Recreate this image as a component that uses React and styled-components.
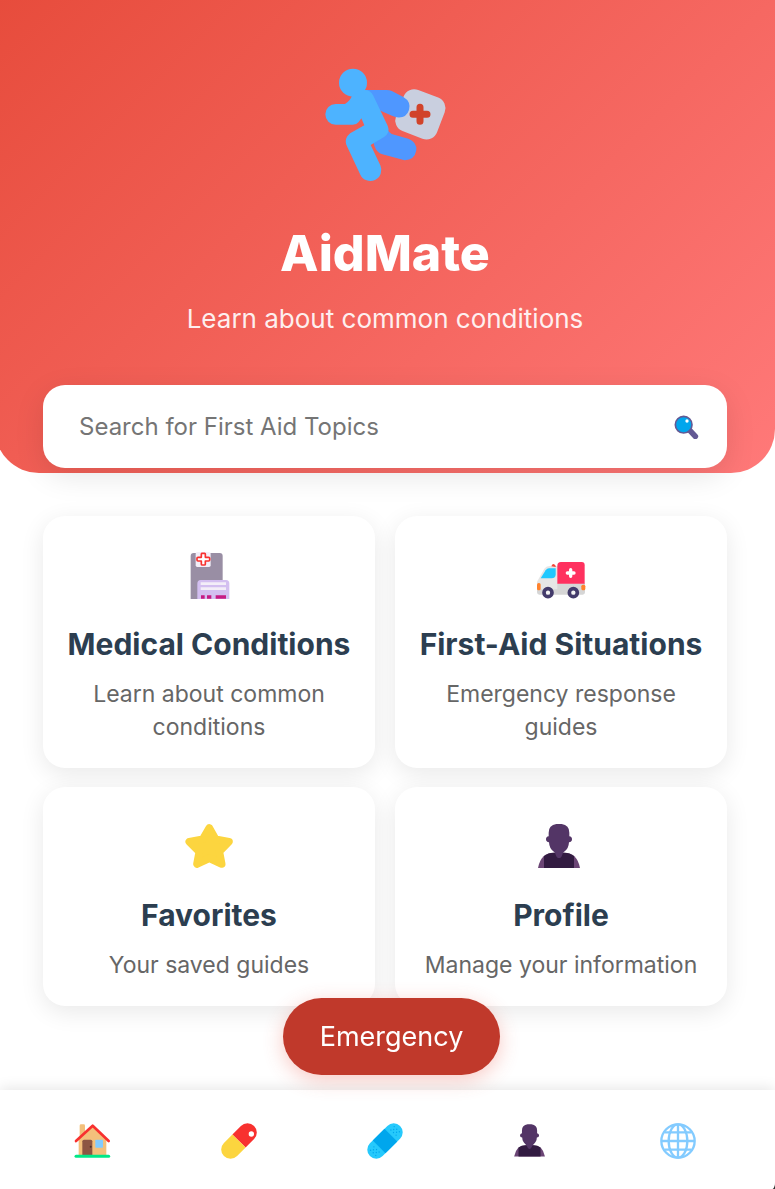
import React from "react";
import styled, { createGlobalStyle } from "styled-components";

const GlobalStyle = createGlobalStyle`
  * { box-sizing: border-box; }
  html { background: #333; }
  body {
    margin: 0;
    overflow-x: hidden;
    font-family: Inter, "Open Sans", sans-serif;
    color: #2c3e50;
  }
  button, input { font-family: inherit; }
`;

const Page = styled.div`
  min-height: 100vh;
  margin-left: -5px;
  padding-bottom: 99px;
  background: #fff;
  border-bottom-right-radius: 3px 8px;
`;

const Header = styled.header`
  display: flex;
  flex-direction: column;
  align-items: center;
  padding: 55px 48px 5px;
  color: #fff;
  text-align: center;
  background: linear-gradient(135deg, #e74c3c, #ff7979);
  border-radius: 0 0 44px 44px;
`;

const AppName = styled.h1`
  margin: 20px 0 0;
  font-size: 50px;
  line-height: 76px;
  font-weight: 800;
`;

const Tagline = styled.p`
  margin: 8px 0 0;
  font-size: 26px;
  line-height: 40px;
  opacity: 0.9;
`;

const SearchBar = styled.form`
  display: flex;
  align-items: center;
  align-self: stretch;
  height: 83px;
  margin-top: 46px;
  padding: 0 20px 0 36px;
  background: #fff;
  border-radius: 22px;
  box-shadow: 0 8px 30px rgba(0, 0, 0, 0.1);
`;

const SearchInput = styled.input`
  flex: 1;
  min-width: 0;
  height: 100%;
  padding: 0;
  border: 0;
  outline: 0;
  background: none;
  font-size: 24px;
  color: #333;
  &::placeholder { color: #757575; opacity: 1; }
`;

const IconButton = styled.button`
  display: flex;
  padding: 8px;
  border: 0;
  background: none;
  cursor: pointer;
`;

const Grid = styled.main`
  display: grid;
  grid-template-columns: repeat(2, 1fr);
  gap: 19px 20px;
  padding: 43px 48px;
`;

const Card = styled.a`
  display: flex;
  flex-direction: column;
  align-items: center;
  padding: 30px 16px 24px;
  text-align: center;
  text-decoration: none;
  color: inherit;
  background: #fff;
  border-radius: 22px;
  box-shadow: 0 6px 24px rgba(0, 0, 0, 0.09);
`;

const CardTitle = styled.h2`
  margin: 17px 0 13px;
  font-size: 30px;
  line-height: 42px;
  font-weight: 700;
  white-space: nowrap;
`;

const CardText = styled.p`
  margin: 0;
  max-width: 284px;
  font-size: 23px;
  line-height: 33px;
  color: #666;
`;

const EmergencyBar = styled.div`
  position: fixed;
  z-index: 3;
  inset: auto 0 114px 0;
  display: flex;
  justify-content: center;
  padding-left: 8px;
  pointer-events: none;
`;

const EmergencyButton = styled.button`
  height: 77px;
  padding: 0 37px;
  border: 0;
  border-radius: 39px;
  background: #c0392b;
  color: #fff;
  font-size: 27px;
  box-shadow: 0 5px 20px rgba(231, 76, 60, 0.3);
  pointer-events: auto;
  cursor: pointer;
`;

const Nav = styled.nav`
  position: fixed;
  z-index: 2;
  inset: auto 0 0 0;
  display: flex;
  height: 99px;
  padding: 2px 24px 0 19px;
  background: #fff;
  border-bottom-right-radius: 3px 8px;
  box-shadow: 0 -2px 14px rgba(0, 0, 0, 0.1);
`;

const NavLink = styled.a`
  flex: 1;
  display: flex;
  align-items: center;
  justify-content: center;
`;

const Logo = () => (
  <svg width="150" height="140" viewBox="0 0 450 420" aria-hidden="true">
    <rect x="265" y="112" width="132" height="132" rx="34" fill="#c9cfdf" transform="rotate(21 331 178)" />
    <path d="M330 157v42M309 178h42" stroke="#d1432a" strokeWidth="21" strokeLinecap="round" />
    <path d="M165 105h65q9 0 17 4l33 17q24 14 17 39-8 25-36 22-7-1-15-5l-40-17-5 38-40-20z" fill="#4f97ff" />
    <path d="M226 210q6 19 19 27l50 14q26 10 24 35-5 29-35 30l-67-18q-17-5-24-26l-5-20z" fill="#4f97ff" />
    <circle cx="129" cy="83" r="42" fill="#4db3ff" />
    <path d="M127 120Q121 137 105 147H77a31 31 0 0 0 0 62H128Q140 209 146 201L154 190L163 211L127 231C108 241 103 258 111 274L151 359A33 33 0 0 0 211 331L182 270L222 246Q242 232 233 212L190 122Q182 105 165 105H150z" fill="#4db3ff" />
  </svg>
);

const SearchIcon = () => (
  <svg width="25" height="25" viewBox="0 0 75 75" aria-hidden="true">
    <path d="M48 50l16 17" stroke="#635994" strokeWidth="17" strokeLinecap="round" />
    <circle cx="29" cy="32" r="25" fill="#00a6ed" stroke="#635994" strokeWidth="5" />
    <circle cx="39" cy="21" r="5" fill="#fff" />
  </svg>
);

const BookletIcon = () => (
  <svg width="60" height="60" viewBox="0 0 180 180" aria-hidden="true">
    <path d="M35 159V30q0-9 9-9h78q9 0 9 9v129z" fill="#998ea4" />
    <rect x="50" y="18" width="45" height="45" rx="5" fill="#f3eef8" />
    <path d="M68 22h9q2 0 2 2v10h10q3 0 3 3v5q0 3-3 3H79v10q0 2-3 2h-6q-3 0-3-2V45H57q-3 0-3-3v-5q0-3 3-3h10V24z" fill="#fff" stroke="#f8312f" strokeWidth="5" strokeLinejoin="round" />
    <path d="M55 159v-46q0-11 10-11h76q10 0 10 11v46z" fill="#d3bff0" />
    <path d="M65 113h76M65 128h76" stroke="#f3eef8" strokeWidth="8" />
    <path d="M66 153h11M84 153h13M110 153h31" stroke="#c61b83" strokeWidth="11" />
  </svg>
);

const AmbulanceIcon = () => (
  <svg width="60" height="60" viewBox="0 0 180 180" aria-hidden="true">
    <path d="M18 139v-32l22-39q5-8 15-8h38v79z" fill="#e6e6e6" />
    <path d="M79 112h83v27q0 7-7 7H25q-7 0-7-7v-9h61z" fill="#d6d6d6" />
    <path d="M79 113V59q0-11 11-11h62q9 0 9 9v56z" fill="#ff315f" />
    <path d="M29 97l15-24q4-6 10-6h20v18q0 12-12 12z" fill="#20c8ff" />
    <path d="M61 61q5-13 13-2v4z" fill="#f44336" />
    <path d="M119 71v20M109 81h20" stroke="#fff" strokeWidth="10" strokeLinecap="round" />
    <rect x="18" y="111" width="11" height="22" rx="5" fill="#ff822d" />
    <rect x="151" y="116" width="12" height="17" rx="5" fill="#ff822d" />
    <circle cx="51" cy="140" r="12" fill="#f4f4f4" stroke="#433b6b" strokeWidth="11" />
    <circle cx="127" cy="140" r="12" fill="#f4f4f4" stroke="#433b6b" strokeWidth="11" />
  </svg>
);

const StarIcon = () => (
  <svg width="60" height="60" viewBox="0 0 180 180" aria-hidden="true">
    <path d="M91 33L110 67L150 74L121 104L128 141L91 124L54 141L61 104L31 74L71 67Z" fill="#fcd53f" stroke="#fcd53f" strokeWidth="23" strokeLinejoin="round" />
  </svg>
);

const PersonIcon = ({ size }) => (
  <svg width={size} height={size} viewBox="0 0 180 180" aria-hidden="true">
    <path d="M21 153q4-22 17-35 12-11 30-11h32q18 0 30 11 13 13 17 35z" fill="#6b4575" />
    <path d="M39 153v-36q12-10 29-10h32q17 0 29 10v36z" fill="#321b41" />
    <path d="M76 21h16q23 3 23 26v11q8 1 8 9t-9 9q-1 18-13 27-7 5-7 10-3 10-10 10t-10-10q0-5-7-10-12-9-13-27-9-1-9-9t8-9V47q0-23 23-26z" fill="#533566" />
  </svg>
);

const HomeIcon = () => (
  <svg width="38" height="38" viewBox="0 0 114 114" aria-hidden="true">
    <path d="M20 43V11q0-4 4-4h8q4 0 4 4v32z" fill="#f3c07b" />
    <path d="M17 103V49l42-41 41 41v54z" fill="#f3c07b" />
    <path d="M9 57L59 11l48 46" fill="none" stroke="#f8312f" strokeWidth="8" strokeLinecap="round" strokeLinejoin="round" />
    <path d="M28 99V58q0-5 5-5h20q5 0 5 5v41z" fill="#8c5543" />
    <circle cx="53" cy="74" r="3" fill="#4a3028" />
    <rect x="67" y="53" width="23" height="24" rx="2" fill="#83cbff" />
    <path d="M9 103h98" stroke="#00e887" strokeWidth="9" strokeLinecap="round" />
  </svg>
);

const PillIcon = () => (
  <svg width="38" height="38" viewBox="0 0 114 114" aria-hidden="true">
    <g transform="rotate(45 57 57)">
      <path d="M29 57V21a28 28 0 0 1 56 0v36z" fill="#f8312f" />
      <path d="M29 57v36a28 28 0 0 0 56 0V57z" fill="#fcd53f" />
    </g>
    <circle cx="94" cy="36" r="8" fill="#fff" />
  </svg>
);

const BandageIcon = () => (
  <svg width="38" height="38" viewBox="0 0 114 114" aria-hidden="true">
    <g transform="rotate(45 57 57)">
      <rect x="30" y="-7" width="54" height="128" rx="27" fill="#26c9fc" />
      <rect x="30" y="32" width="54" height="50" fill="#00a6ed" />
      <g fill="#00a6ed">
        {[7, 21, 93, 107].map((y) =>
          [46, 57, 68].map((x) => <circle key={`${x}-${y}`} cx={x} cy={y} r="2" />)
        )}
        {[14, 100].map((y) => [51, 63].map((x) => <circle key={`${x}-${y}`} cx={x} cy={y} r="2" />))}
      </g>
    </g>
  </svg>
);

const GlobeIcon = () => (
  <svg width="38" height="38" viewBox="0 0 114 114" fill="none" stroke="#83cbff" strokeWidth="7" aria-hidden="true">
    <circle cx="57" cy="57" r="50" />
    <ellipse cx="57" cy="57" rx="28" ry="50" />
    <path d="M57 7v100M7 57h100M17 31h80M17 83h80" />
  </svg>
);

const topics = [
  { title: "Medical Conditions", text: "Learn about common conditions", icon: <BookletIcon /> },
  { title: "First-Aid Situations", text: "Emergency response guides", icon: <AmbulanceIcon /> },
  { title: "Favorites", text: "Your saved guides", icon: <StarIcon /> },
  { title: "Profile", text: "Manage your information", icon: <PersonIcon size={60} /> },
];

const links = [
  { label: "Home", icon: <HomeIcon /> },
  { label: "Conditions", icon: <PillIcon /> },
  { label: "First aid", icon: <BandageIcon /> },
  { label: "Profile", icon: <PersonIcon size={44} /> },
  { label: "Language", icon: <GlobeIcon /> },
];

export default function App() {
  return (
    <>
      <GlobalStyle />
      <Page>
        <Header>
          <Logo />
          <AppName>AidMate</AppName>
          <Tagline>Learn about common conditions</Tagline>
          <SearchBar role="search" onSubmit={(e) => e.preventDefault()}>
            <SearchInput type="text" aria-label="Search for First Aid Topics" placeholder="Search for First Aid Topics" />
            <IconButton type="submit" aria-label="Search">
              <SearchIcon />
            </IconButton>
          </SearchBar>
        </Header>
        <Grid>
          {topics.map((t) => (
            <Card key={t.title} href="#">
              {t.icon}
              <CardTitle>{t.title}</CardTitle>
              <CardText>{t.text}</CardText>
            </Card>
          ))}
        </Grid>
      </Page>
      <EmergencyBar>
        <EmergencyButton type="button">Emergency</EmergencyButton>
      </EmergencyBar>
      <Nav aria-label="Main">
        {links.map((l) => (
          <NavLink key={l.label} href="#" aria-label={l.label}>
            {l.icon}
          </NavLink>
        ))}
      </Nav>
    </>
  );
}
